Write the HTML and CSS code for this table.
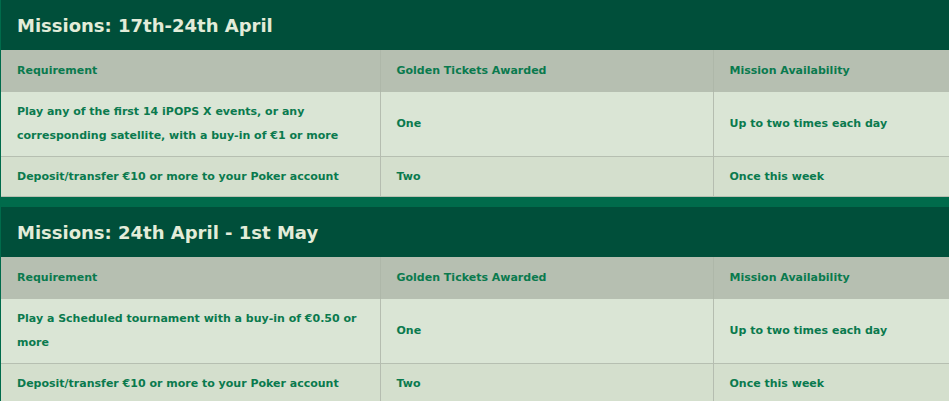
FILE: index.html
```html
<!DOCTYPE html>
<html>
<head>
<meta charset="utf-8">
<link rel="stylesheet" href="styles.css">
</head>
<body>
<div class="page">
  <section class="mission">
    <h2 class="title">Missions: 17th-24th April</h2>
    <table class="grid">
      <colgroup><col class="c1"><col class="c2"><col class="c3"></colgroup>
      <tr class="head"><th>Requirement</th><th>Golden Tickets Awarded</th><th>Mission Availability</th></tr>
      <tr class="odd"><td>Play any of the first 14 iPOPS X events, or any corresponding satellite, with a buy-in of €1 or more</td><td>One</td><td>Up to two times each day</td></tr>
      <tr class="even"><td>Deposit/transfer €10 or more to your Poker account</td><td>Two</td><td>Once this week</td></tr>
    </table>
  </section>
  <section class="mission">
    <h2 class="title">Missions: 24th April - 1st May</h2>
    <table class="grid">
      <colgroup><col class="c1"><col class="c2"><col class="c3"></colgroup>
      <tr class="head"><th>Requirement</th><th>Golden Tickets Awarded</th><th>Mission Availability</th></tr>
      <tr class="odd"><td>Play a Scheduled tournament with a buy-in of €0.50 or more</td><td>One</td><td>Up to two times each day</td></tr>
      <tr class="even"><td>Deposit/transfer €10 or more to your Poker account</td><td>Two</td><td>Once this week</td></tr>
    </table>
  </section>
</div>
</body>
</html>
```
FILE: styles.css
```css
html, body { margin: 0; padding: 0; }
body { background: #006b4b; font-family: "DejaVu Sans", Verdana, sans-serif; }
.page { display: flex; flex-direction: column; gap: 10px; padding-left: 1px; width: 980px; }
.mission { background: #004f3a; }
.title {
  margin: 0; height: 50px; box-sizing: border-box;
  padding: 14px 0 0 16px;
  color: #e3ecd9; font-size: 18px; font-weight: bold; line-height: 24px;
}
.grid { border-collapse: collapse; width: 100%; table-layout: fixed; }
.c1 { width: 379px; }
.c2 { width: 333px; }
.grid th, .grid td {
  text-align: left; vertical-align: middle;
  font-size: 11px; font-weight: bold; color: #0a7a4e;
  line-height: 24px; padding: 8px 16px;
  border-left: 1px solid #b5bdb0;
}
.grid th:first-child, .grid td:first-child { border-left: none; }
.grid th { background: #b6bfb1; height: 25px; padding-top: 8px; padding-bottom: 8px; border-left-color: #aeb7a9; }
.grid tr.odd td { background: #dae5d5; border-top: 1px solid #b6bfb1; }
.grid tr.even td { background: #d4dfcd; border-top: 1px solid #b6bfb1; padding-bottom: 7px; }
.grid tr:last-child td { border-bottom: 1px solid #b6bfb1; }
```
